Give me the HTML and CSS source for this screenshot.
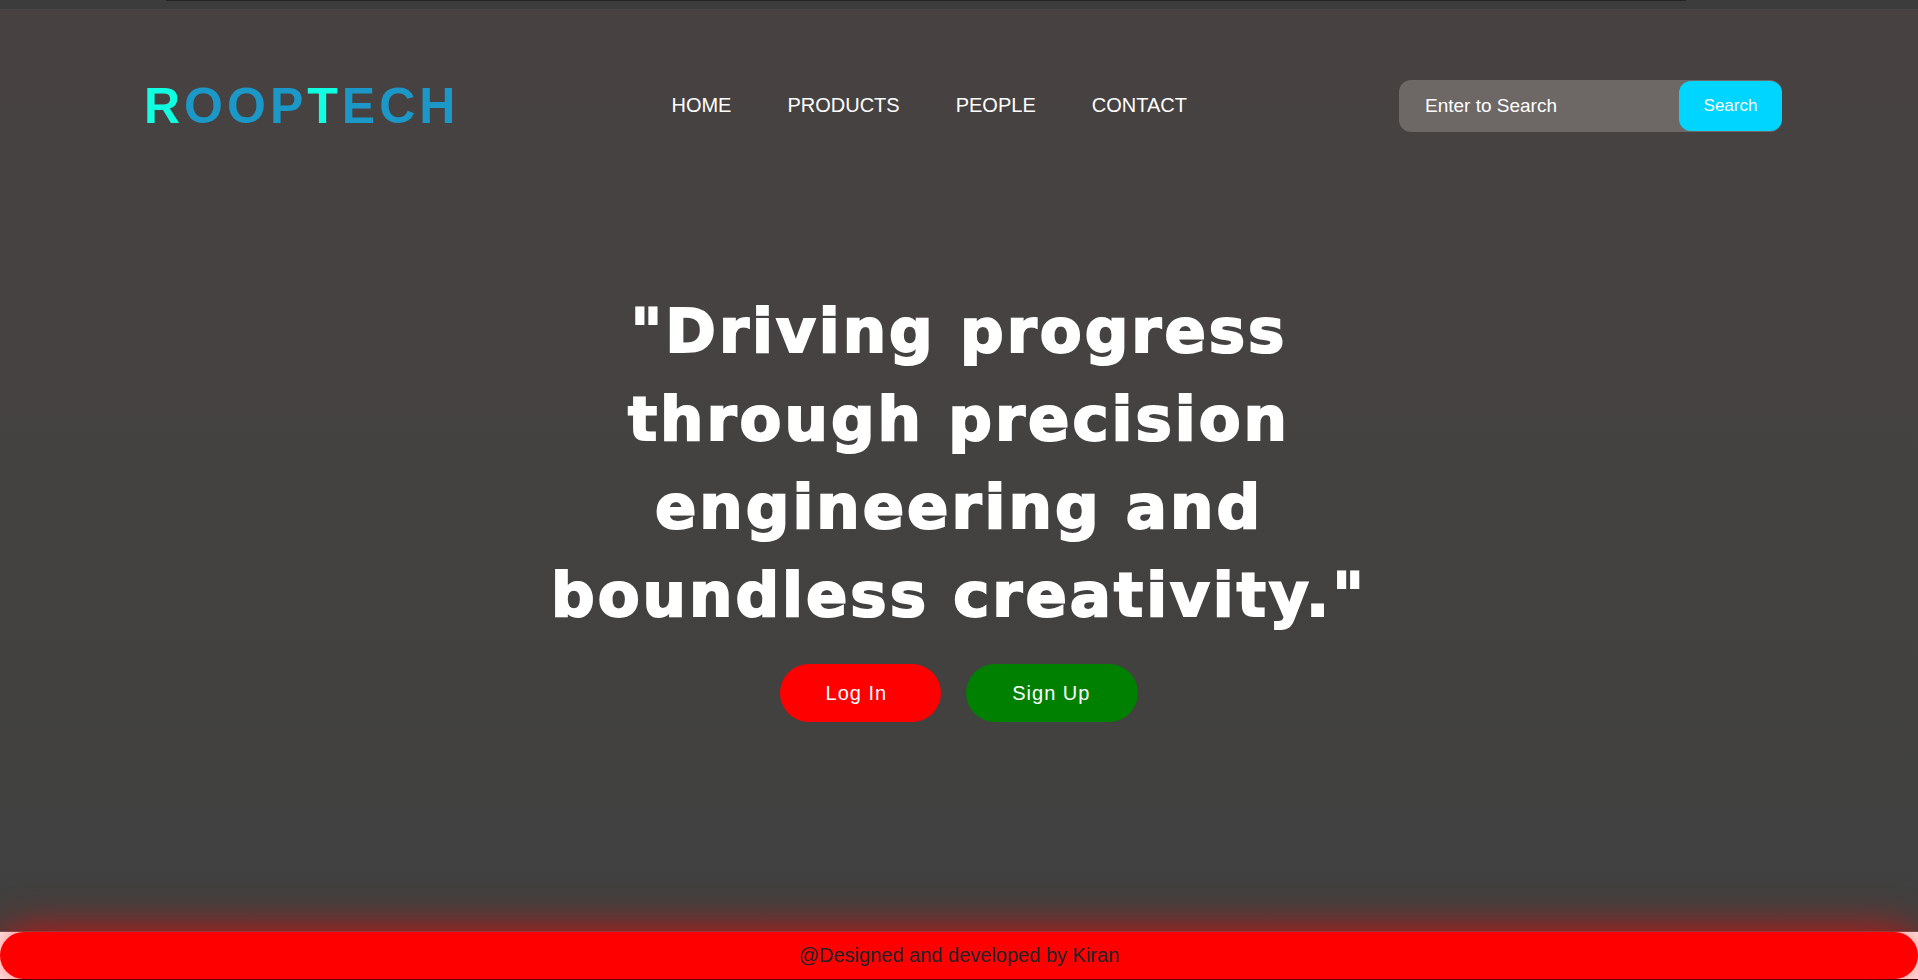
FILE: index.html
```html
<!DOCTYPE html>
<html lang="en">
<head>
<meta charset="utf-8">
<title>RoopTech</title>
<link rel="stylesheet" href="styles.css">
</head>
<body>
<div class="top-strip"></div>
<div class="hero">
  <header class="header">
    <a class="logo" href="#"><span class="accent">R</span>OOP<span class="accent">T</span>ECH</a>
    <nav class="nav">
      <a href="#">HOME</a>
      <a href="#">PRODUCTS</a>
      <a href="#">PEOPLE</a>
      <a href="#">CONTACT</a>
    </nav>
    <form class="search" role="search">
      <input class="search-input" type="text" placeholder="Enter to Search" aria-label="Enter to Search">
      <button class="search-button" type="button">Search</button>
    </form>
  </header>
  <main class="main">
    <h1 class="quote">"Driving progress through precision engineering and boundless creativity."</h1>
    <div class="actions">
      <button class="button login" type="button">Log In</button>
      <button class="button signup" type="button">Sign Up</button>
    </div>
  </main>
</div>
<div class="footer-wrap">
  <footer class="footer">@Designed and developed by Kiran</footer>
</div>
</body>
</html>
```

FILE: styles.css
```css
* {
  box-sizing: border-box;
}

body {
  margin: 0;
  min-height: 100vh;
  display: flex;
  flex-direction: column;
  font-family: "Liberation Sans", Arial, sans-serif;
  color: #fff;
  background: #404140;
}

.top-strip {
  height: 10px;
  background: linear-gradient(#232323, #232323) 166px 0 / 1520px 1px no-repeat, #3c3c3c;
  border-bottom: 1px solid #464646;
}

.hero {
  flex: 1;
  background: linear-gradient(#474241, #444241 50%, #3f403f);
  border-bottom: 1px solid #5c5c5c;
}

.header {
  display: flex;
  justify-content: space-between;
  align-items: center;
  padding: 70px 136px 0 144px;
}

.logo {
  font-size: 50px;
  line-height: 52px;
  font-weight: bold;
  letter-spacing: 4px;
  color: #1b98c8;
  text-decoration: none;
}

.accent {
  color: #0fffe0;
}

.nav {
  display: flex;
  gap: 56px;
  padding-bottom: 2px;
}

.nav a {
  font-size: 20px;
  color: #fff;
  text-decoration: none;
}

.search {
  display: flex;
  align-items: center;
  width: 383px;
  height: 52px;
  border-radius: 12px;
  background: #6d6766;
}

.search-input {
  flex: 1;
  min-width: 0;
  height: 50px;
  padding: 0 0 0 26px;
  border: 0;
  outline: 0;
  background: none;
  font: 19px "Liberation Sans", Arial, sans-serif;
  color: #fff;
}

.search-input::placeholder {
  color: #fff;
  opacity: 1;
}

.search-button {
  width: 103px;
  height: 50px;
  border: 0;
  border-radius: 12px;
  background: #00d5ff;
  font: 17px "Liberation Sans", Arial, sans-serif;
  color: #fff;
}

.main {
  display: flex;
  flex-direction: column;
  align-items: center;
  gap: 25px;
  padding-top: 155px;
}

.quote {
  max-width: 880px;
  margin: 0;
  font-family: "Arial Black", "DejaVu Sans", sans-serif;
  font-size: 61px;
  line-height: 88px;
  font-weight: 900;
  letter-spacing: 3px;
  text-align: center;
  -webkit-text-stroke: 2px #fff;
}

.actions {
  display: flex;
  gap: 25px;
}

.button {
  height: 58px;
  padding: 0 48px 0 46px;
  border: 0;
  border-radius: 30px;
  font: 20px "Liberation Sans", Arial, sans-serif;
  letter-spacing: 1px;
  color: #fff;
}

.login {
  padding-right: 54px;
  background: #f00;
}

.signup {
  background: #008000;
}

.footer-wrap {
  background: #fff;
  border-bottom: 1px solid #000;
}

.footer {
  padding: 12px 20px;
  border-radius: 24px;
  background: #f00;
  box-shadow: 0 0 40px rgba(255, 0, 0, 0.8);
  font-size: 20px;
  line-height: 23px;
  text-align: center;
  color: #212529;
}
```
